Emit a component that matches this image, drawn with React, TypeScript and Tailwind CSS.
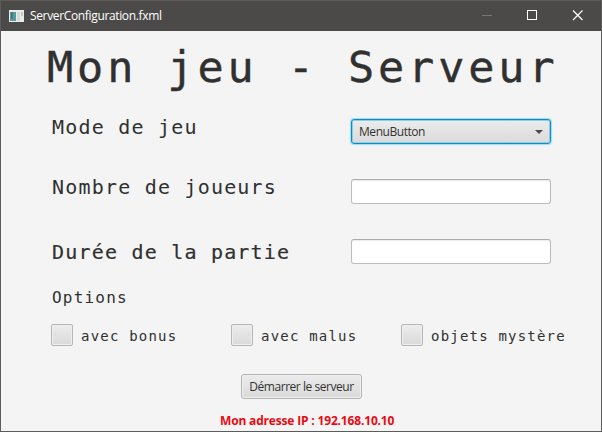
import React from "react";

const mono = "font-['DejaVu_Sans_Mono','Liberation_Mono',monospace] text-[#303030] whitespace-pre";

function Field() {
  return (
    <div className="h-[25px] w-[200px] rounded-[3px] border border-[#bcbcbc] border-t-[#acacac] bg-white shadow-[inset_0_1px_1px_#ececec]" />
  );
}

function CheckOption({ label }: { label: string }) {
  return (
    <label className="flex h-[22px] items-center gap-[8px]">
      <span className="size-[22px] shrink-0 rounded-[2px] border border-[#b5b5b5] bg-linear-to-b from-[#ececec] to-[#dadada] shadow-[inset_0_0_0_1px_#efefef]" />
      <span className={`${mono} pt-[2px] text-[14px] leading-5 tracking-[1.2px]`}>{label}</span>
    </label>
  );
}

export default function App() {
  return (
    <div className="flex h-[432px] w-[602px] flex-col overflow-hidden border border-t-0 border-[#5c5c5c] bg-[#f4f4f4] font-['Open_Sans','Noto_Sans',sans-serif]">
      <header className="-mx-px flex h-[31px] shrink-0 items-center border-t border-[#5c5b59] bg-[#4b4a48] pl-[9px] text-white">
        <svg width="15" height="12" viewBox="0 0 15 12">
          <rect width="15" height="12" fill="#e8ecea" />
          <rect x="1" y="2" width="6" height="9" fill="#5b9a98" />
          <rect x="2" y="2" width="2" height="7" fill="#3f7f87" />
          <rect x="8" y="2" width="3" height="9" fill="#d5dad8" />
          <rect x="12" y="2" width="2" height="4" fill="#bdc9c7" />
        </svg>
        <span className="ml-[6px] flex-1 text-[12px] leading-4 tracking-[-0.35px]">ServerConfiguration.fxml</span>
        <svg width="120" height="30" viewBox="0 0 120 30" fill="none" className="shrink-0">
          <path d="M0 14.5h10" stroke="#777674" />
          <rect x="45.5" y="9.5" width="9" height="9" stroke="#fff" />
          <path d="M91 9.500l9.500 9.500M100.500 9.500l-9.500 9.500" stroke="#fff" strokeWidth="1.200" />
        </svg>
      </header>
      <main className="flex flex-1 flex-col pl-[50px]">
        <h1 className={`${mono} -ml-[4px] mt-[8px] h-[58px] text-[43.500px] leading-[56px] tracking-[3.900px] [-webkit-text-stroke:0.400px_#303030]`}>
          Mon jeu - Serveur
        </h1>
        <div className="mt-[22px] flex h-[25px]">
          <span className={`${mono} w-[300px] pl-px text-[20px] leading-[16px] tracking-[1.200px]`}>Mode de jeu</span>
          <button className="flex h-[25px] w-[200px] items-center justify-between rounded-[3px] border border-[#0d8fbd] bg-linear-to-b from-[#ececec] to-[#dadada] pr-[7px] pl-[7px] text-[12px] tracking-[-0.45px] text-[#333] shadow-[0_0_1px_1px_#9bdcf3,inset_0_0_0_1px_#8fcde4]">
            <span>MenuButton</span>
            <svg width="8" height="4" viewBox="0 0 8 4"><path d="M0 0h8L4 4z" fill="#4a4a4a" /></svg>
          </button>
        </div>
        <div className="mt-[35px] flex h-[25px]">
          <span className={`${mono} w-[300px] pl-px text-[20px] leading-[16px] tracking-[1.200px]`}>Nombre de joueurs</span>
          <Field />
        </div>
        <div className="mt-[35px] flex h-[25px]">
          <span className={`${mono} w-[300px] pl-px text-[20px] leading-[26px] tracking-[1.200px] [-webkit-text-stroke:0.200px_#303030]`}>Durée de la partie</span>
          <Field />
        </div>
        <h2 className={`${mono} mt-[24px] h-[20px] pl-px text-[16px] leading-5 tracking-[1.200px]`}>Options</h2>
        <div className="mt-[16px] grid h-[22px] grid-cols-[180px_170px_180px]">
          <CheckOption label="avec bonus" />
          <CheckOption label="avec malus" />
          <CheckOption label="objets mystère" />
        </div>
        <button className="mt-[28px] ml-[190px] h-[25px] w-[121px] rounded-[3px] border border-[#b5b5b5] bg-linear-to-b from-[#ececec] to-[#dadada] text-[12px] leading-4 tracking-[-0.45px] whitespace-nowrap text-[#333] shadow-[inset_0_0_0_1px_#efefef]">
          Démarrer le serveur
        </button>
        <p className="mt-[14px] ml-[169px] text-[12px] leading-4 font-bold tracking-[-0.17px] whitespace-nowrap text-[#e80a12]">Mon adresse IP : 192.168.10.10</p>
      </main>
    </div>
  );
}
